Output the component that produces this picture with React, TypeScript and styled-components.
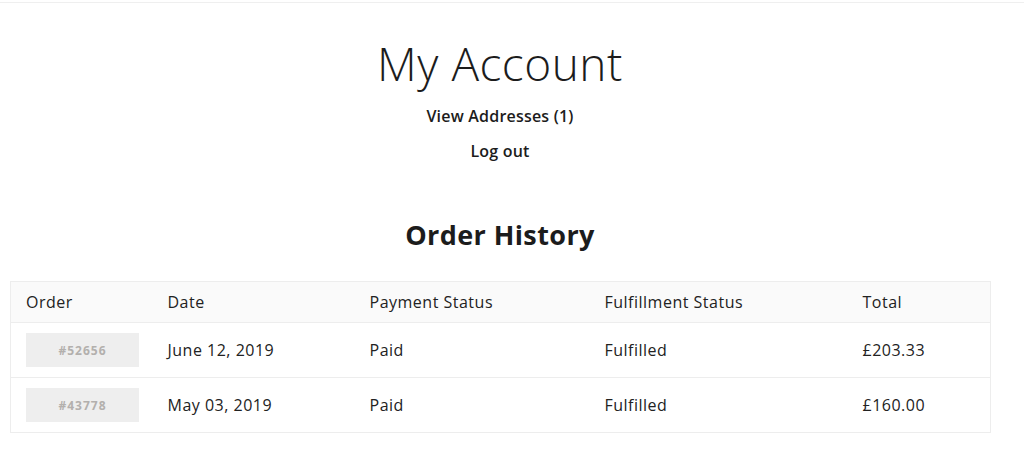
import React from 'react';
import styled, { createGlobalStyle } from 'styled-components';

const GlobalStyle = createGlobalStyle`
	html, body {
		margin: 0;
		padding: 0;
		background: #fff;
		color: #1c1c1c;
		font-family: 'Open Sans', 'Lato', sans-serif;
	}
`;

const TopRule = styled.div`
	height: 2px;
	border-bottom: 1px solid #efefef;
`;

const Page = styled.main`
	width: 980px;
	margin-left: 10px;
	display: flex;
	flex-direction: column;
	align-items: center;
`;

const Title = styled.h1`
	margin: 34px 0 0;
	font-size: 46px;
	font-weight: 300;
	line-height: 52px;
	letter-spacing: 0.5px;
`;

const AccountLinks = styled.nav`
	margin-top: 17px;
	display: flex;
	flex-direction: column;
	align-items: center;
	gap: 15px;
`;

const AccountLink = styled.a`
	font-size: 16px;
	font-weight: 600;
	line-height: 20px;
	color: #1c1c1c;
	text-decoration: none;
	letter-spacing: 0.2px;
`;

const SectionTitle = styled.h2`
	margin: 57px 0 0;
	font-size: 27px;
	font-weight: 700;
	line-height: 34px;
	letter-spacing: 0.4px;
`;

const Table = styled.table`
	align-self: stretch;
	margin-top: 29px;
	width: 100%;
	table-layout: fixed;
	border-collapse: collapse;
	border: 1px solid #ededed;
	font-size: 16px;
	letter-spacing: 0.5px;
	color: #222;
`;

const HeadCell = styled.th`
	height: 40px;
	padding: 0 15px;
	text-align: left;
	font-weight: 400;
	background: #fafafa;
	border-bottom: 1px solid #ededed;
`;

const Row = styled.tr`
	& + & td {
		border-top: 1px solid #ededed;
	}
`;

const Cell = styled.td`
	height: 54px;
	padding: 0 15px;
	white-space: nowrap;
`;

const OrderBadge = styled.a`
	display: flex;
	align-items: center;
	justify-content: center;
	width: 113px;
	height: 34px;
	background: #eeeeee;
	color: #b3b0ad;
	font-size: 12px;
	font-weight: 700;
	letter-spacing: 1px;
	text-decoration: none;
`;

const columns = [
	{ label: 'Order', width: 142 },
	{ label: 'Date', width: 202 },
	{ label: 'Payment Status', width: 235 },
	{ label: 'Fulfillment Status', width: 258 },
	{ label: 'Total', width: 143 },
];

const orders = [
	{ id: '#52656', date: 'June 12, 2019', payment: 'Paid', fulfillment: 'Fulfilled', total: '£203.33' },
	{ id: '#43778', date: 'May 03, 2019', payment: 'Paid', fulfillment: 'Fulfilled', total: '£160.00' },
];

export default function App() {
	return <>
		<GlobalStyle/>
		<TopRule/>
		<Page>
			<Title>My Account</Title>
			<AccountLinks>
				<AccountLink href="#">View Addresses (1)</AccountLink>
				<AccountLink href="#">Log out</AccountLink>
			</AccountLinks>
			<SectionTitle>Order History</SectionTitle>
			<Table>
				<colgroup>
					{columns.map(c => <col key={c.label} width={c.width}/>)}
				</colgroup>
				<thead>
					<tr>
						{columns.map(c => <HeadCell key={c.label}>{c.label}</HeadCell>)}
					</tr>
				</thead>
				<tbody>
					{orders.map(o => <Row key={o.id}>
						<Cell><OrderBadge href="#">{o.id}</OrderBadge></Cell>
						<Cell>{o.date}</Cell>
						<Cell>{o.payment}</Cell>
						<Cell>{o.fulfillment}</Cell>
						<Cell>{o.total}</Cell>
					</Row>)}
				</tbody>
			</Table>
		</Page>
	</>;
}
